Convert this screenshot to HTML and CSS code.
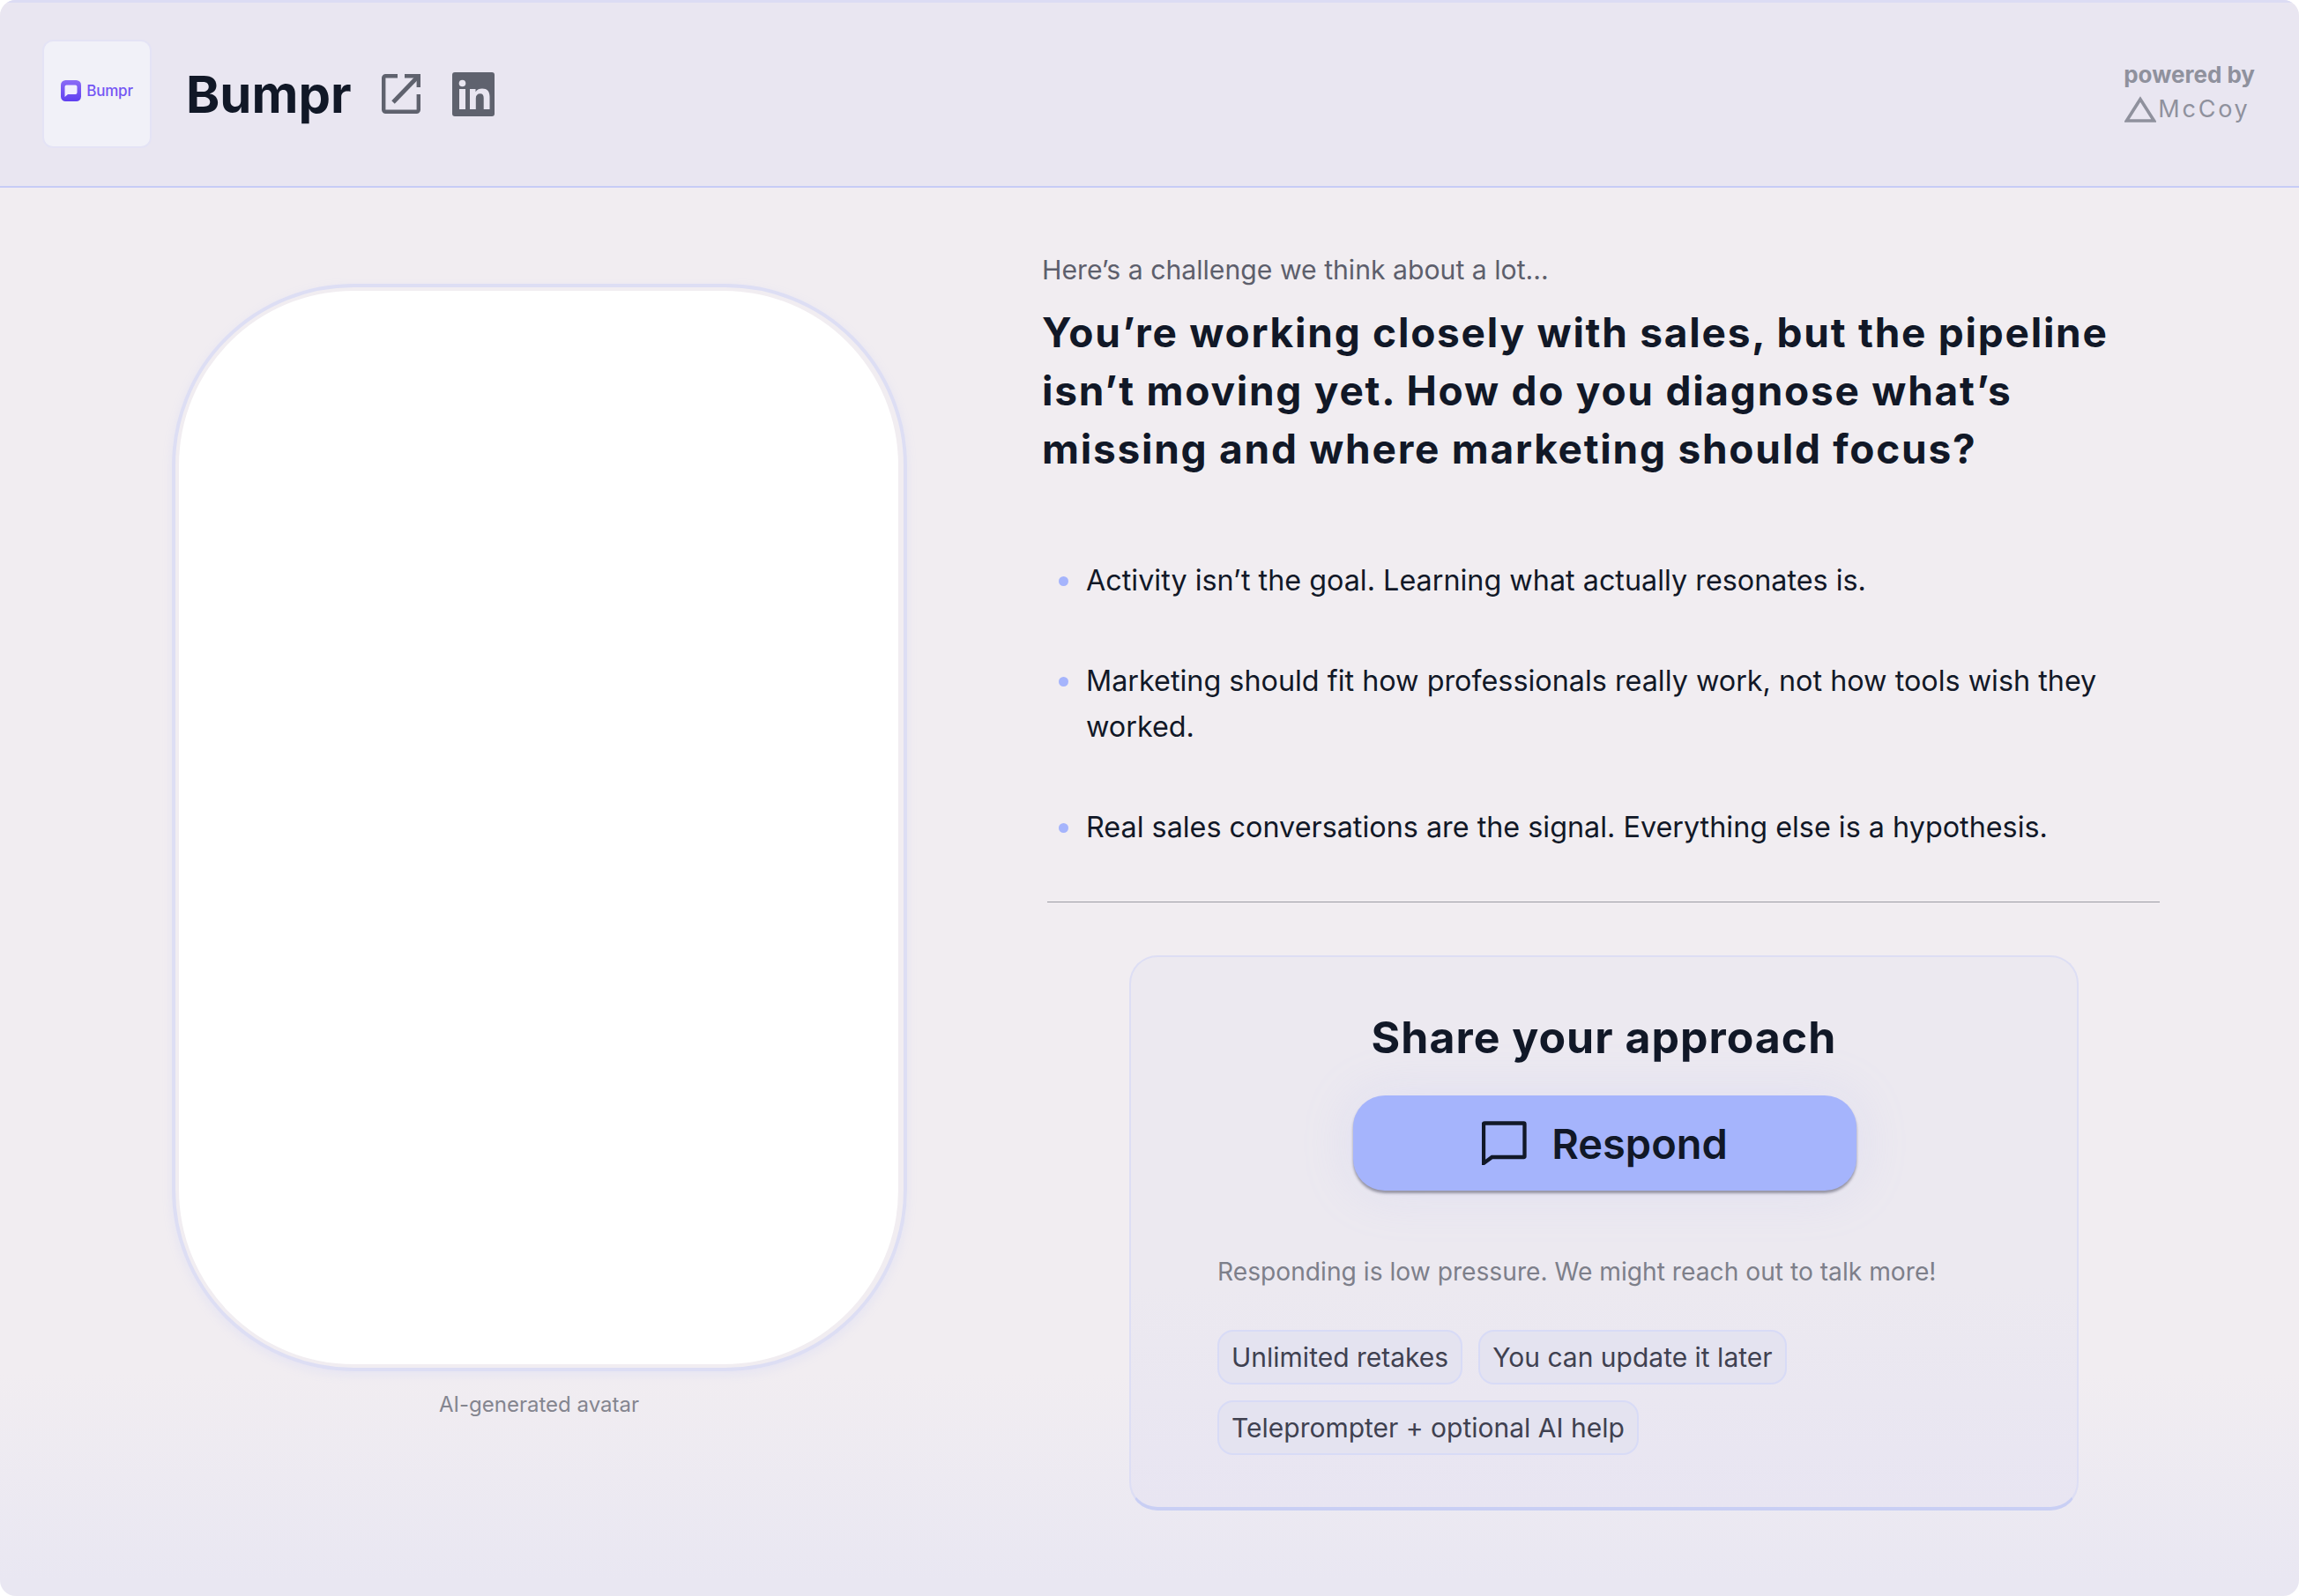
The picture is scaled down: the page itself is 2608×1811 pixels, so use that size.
FILE: index.html
```html
<!DOCTYPE html>
<html lang="en">
<head>
<meta charset="utf-8">
<title>Bumpr</title>
<link rel="stylesheet" href="styles.css">
</head>
<body>
<div class="app">
  <header class="topbar">
    <div class="logo-box">
      <svg class="logo-mark" viewBox="0 0 23 24" width="23" height="24" aria-hidden="true">
        <defs><linearGradient id="lg" x1="0" y1="0" x2="0" y2="1"><stop offset="0" stop-color="#8b6cf6"/><stop offset="1" stop-color="#5f3ff0"/></linearGradient></defs>
        <rect width="23" height="24" rx="5.500" fill="url(#lg)"/>
        <path d="M6.500 5.500h10a2 2 0 0 1 2 2v6.500a2 2 0 0 1-2 2H8l-3.500 3V7.500a2 2 0 0 1 2-2z" fill="#f1eefe"/>
      </svg>
      <span class="logo-word">Bumpr</span>
    </div>
    <h1 class="brand">Bumpr</h1>
    <svg class="ext-icon" viewBox="0 0 44 45" width="44" height="45" aria-hidden="true">
      <path d="M18 2.200H4.500a2.300 2.300 0 0 0-2.300 2.300v36a2.300 2.300 0 0 0 2.300 2.300h35a2.300 2.300 0 0 0 2.300-2.300V23" fill="none" stroke="#5f626e" stroke-width="4.400"/>
      <path d="M13 32 41 3" fill="none" stroke="#5f626e" stroke-width="4.800"/>
      <path d="M26 2.200h15.800V15" fill="none" stroke="#5f626e" stroke-width="4.400"/>
    </svg>
    <svg class="in-icon" viewBox="0 0 48 50" width="48" height="50" aria-hidden="true">
      <rect width="48" height="50" rx="3" fill="#5f626e"/>
      <rect x="8" y="19" width="7" height="23" fill="#e9e6f1"/>
      <circle cx="11.500" cy="12.500" r="3.800" fill="#e9e6f1"/>
      <path d="M20 19h6.500v3.200c1.800-2.700 4.400-3.700 7.500-3.700 5.600 0 8.500 3.200 8.500 9V42h-6.800V29c0-3.200-1.300-4.800-3.900-4.800-3.200 0-5 2-5 5.300V42H20z" fill="#e9e6f1"/>
    </svg>
    <div class="powered">
      <span class="powered-by">powered by</span>
      <span class="mccoy">
        <svg viewBox="0 0 36 30" width="36" height="30" aria-hidden="true"><path d="M18 3.500 2.500 28h31z" fill="none" stroke="#8f919d" stroke-width="3.600"/></svg>
        <span class="mccoy-word">McCoy</span>
      </span>
    </div>
  </header>

  <main class="content">
    <section class="avatar-col">
      <div class="avatar-frame"><div class="avatar"></div></div>
      <p class="avatar-note">AI-generated avatar</p>
    </section>
    <section class="detail-col">
      <p class="eyebrow">Here’s a challenge we think about a lot...</p>
      <h2 class="question">You’re working closely with sales, but the pipeline isn’t moving yet. How do you diagnose what’s missing and where marketing should focus?</h2>
      <ul class="points">
        <li>Activity isn’t the goal. Learning what actually resonates is.</li>
        <li>Marketing should fit how professionals really work, not how tools wish they worked.</li>
        <li>Real sales conversations are the signal. Everything else is a hypothesis.</li>
      </ul>
      <hr class="rule">
      <div class="card">
        <h3 class="card-title">Share your approach</h3>
        <button class="respond" type="button">
          <svg viewBox="0 0 51 50" width="51" height="50" aria-hidden="true"><path d="M3.500 2.500h44a1 1 0 0 1 1 1v36.500a1 1 0 0 1-1 1H11.500L2 48V3.500a1 1 0 0 1 1.500-1z" fill="none" stroke="#111827" stroke-width="4.300"/></svg>
          <span>Respond</span>
        </button>
        <p class="note">Responding is low pressure. We might reach out to talk more!</p>
        <div class="chips">
          <span class="chip">Unlimited retakes</span>
          <span class="chip">You can update it later</span>
          <span class="chip">Teleprompter + optional AI help</span>
        </div>
      </div>
    </section>
  </main>
</div>
</body>
</html>
```
FILE: styles.css
```css
* { box-sizing: border-box; }
html, body { margin: 0; padding: 0; background: #fff; }
body { font-family: Inter, "Liberation Sans", sans-serif; color: #111827; }

.app {
  width: 2608px;
  height: 1811px;
  border-radius: 18px;
  overflow: hidden;
  display: flex;
  flex-direction: column;
  background: linear-gradient(180deg, #f1edf1 0%, #f1edf1 86%, #e9e7f2 99%);
}

.topbar {
  height: 213px;
  flex: none;
  display: flex;
  align-items: center;
  padding: 0 50px 0 48px;
  background: #e9e6f1;
  border-top: 3px solid #dcdcf4;
  border-bottom: 2px solid #c7ccf6;
}
.logo-box {
  width: 124px;
  height: 123px;
  margin-top: -1px;
  display: flex;
  align-items: center;
  justify-content: center;
  gap: 6px;
  border: 2px solid #e4e3f5;
  border-radius: 12px;
  background: #f1f1f8;
}
.logo-word { font-size: 17px; font-weight: 500; color: #7455f4; letter-spacing: -.2px; margin-top: -7px; }
.logo-mark { margin-top: -7px; }
.brand {
  width: 186px;
  margin: 0 0 0 39px;
  font-size: 58px;
  font-weight: 700;
  line-height: 1;
}
.ext-icon { margin-left: 36px; margin-top: -1px; }
.in-icon { margin-left: 36px; }

.powered {
  margin-left: auto;
  display: flex;
  flex-direction: column;
  align-items: flex-start;
  gap: 7px;
  color: #8f919d;
  margin-top: -4px;
}
.powered-by { font-size: 26px; font-weight: 700; line-height: 30px; }
.mccoy { display: flex; align-items: center; gap: 2px; padding-left: 1px; }
.mccoy-word { font-size: 27px; font-weight: 400; letter-spacing: 2.800px; line-height: 34px; }

.content {
  flex: 1;
  display: flex;
  align-items: flex-start;
}

.avatar-col {
  width: 1222px;
  padding: 109px 0 0 195px;
  flex: none;
}
.avatar-frame {
  width: 834px;
  height: 1234px;
  padding: 4px 6px 4px 4px;
  border: 4px solid #dddef4;
  border-radius: 206px;
  box-shadow: 0 4px 12px rgba(165, 180, 252, .15);
}
.avatar { width: 100%; height: 100%; background: #fff; border-radius: 198px; }
.avatar-note {
  width: 833px;
  margin: 22px 0 0;
  text-align: center;
  font-size: 24px;
  line-height: 32px;
  color: #84858f;
}

.detail-col { width: 1268px; margin-left: -40px; padding-top: 71px; }
.eyebrow { margin: 0; font-size: 30.200px; line-height: 44px; color: #5d5f6c; }
.question {
  margin: 16px 0 0;
  font-size: 46px;
  font-weight: 700;
  line-height: 66px;
  letter-spacing: 1.750px;
}
.points { list-style: none; margin: 91px 0 0; padding: 0; }
.points li {
  position: relative;
  padding-left: 50px;
  font-size: 32.350px;
  line-height: 52px;
  margin-bottom: 62px;
}
.points li:last-child { margin-bottom: 0; }
.points li::before {
  content: "";
  position: absolute;
  left: 19px;
  top: 21px;
  width: 11px;
  height: 11px;
  border-radius: 50%;
  background: #a5b4fc;
}
.rule { margin: 58px 0 0 6px; width: 1262px; height: 1px; border: 0; background: #9b9ba3; }

.card {
  margin: 60px 0 0 99px;
  width: 1077px;
  height: 630px;
  border: 2px solid #dddef4;
  border-bottom: 4px solid #c9cff4;
  border-radius: 32px;
  background: linear-gradient(180deg, #ece9f0 0%, #ece9f0 60%, #e8e5f2 100%);
  padding: 0 98px;
  display: flex;
  flex-direction: column;
}
.card-title {
  margin: 59px 0 0;
  align-self: center;
  font-size: 50px;
  font-weight: 700;
  line-height: 64px;
  letter-spacing: 1px;
}
.respond {
  align-self: center;
  width: 571px;
  height: 108px;
  margin: 34px 0 0 2px;
  border: 0;
  border-radius: 36px;
  background: #a5b4fc;
  color: #111827;
  display: flex;
  align-items: center;
  justify-content: center;
  gap: 28px;
  font-family: Inter, sans-serif;
  font-size: 47px;
  font-weight: 600;
  box-shadow: 0 3px 3px rgba(50, 50, 70, .45), 0 0 60px rgba(165, 180, 252, .18);
}
.note { margin: 70px 0 0; font-size: 28.200px; line-height: 44px; color: #7d7f8a; }
.chips { display: flex; flex-wrap: wrap; gap: 18px; margin-top: 44px; }
.chip {
  height: 62px;
  display: flex;
  align-items: center;
  padding: 0 14px;
  border: 2px solid #d8dbf6;
  border-radius: 18px;
  background: #e4e3f0;
  font-size: 30px;
  color: #3f4150;
}
```
